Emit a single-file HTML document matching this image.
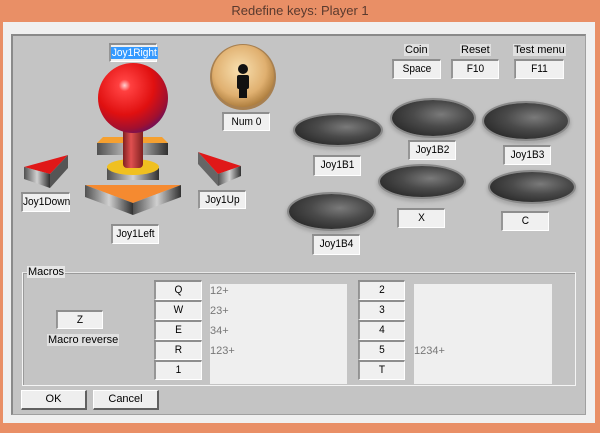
<!DOCTYPE html>
<html><head><style>
*{margin:0;padding:0;box-sizing:border-box}
body{width:600px;height:433px;background:#e98f66;position:relative;overflow:hidden;font-family:"Liberation Sans",Arial,sans-serif;font-size:11px;color:#000}
.a{position:absolute}
.win{left:3px;top:22px;width:592px;height:401px;background:#f0f0f0}
.panel{left:11px;top:34px;width:575px;height:381px;background:#c4c4c4;border:1px solid #a0a0a0;border-left:2px solid #8a8a8a;border-top:2px solid #8a8a8a}
.b{position:absolute;background:#f0f0f0;border-top:2px solid #8e8e8e;border-left:2px solid #8e8e8e;border-right:1px solid #fff;border-bottom:1px solid #fff;text-align:center;line-height:16px;font-size:11px;transform:scaleX(.92)}
.btn{position:absolute;background:#eeeeee;border:1px solid #fff;border-right:2px solid #606060;border-bottom:2px solid #606060;text-align:center;line-height:17px}
.lbl{position:absolute;background:#e0e0e0;font-size:11px;line-height:12px;padding:0 1px}
.el{position:absolute;border-radius:50%;background:radial-gradient(ellipse at 60% 40%,#7a7a7a 0%,#4a4a4a 40%,#2e2e2e 75%,#0e0e0e 100%);box-shadow:0 0 0 2px #8a8a8a,0 2px 3px 3px #a8a8a8}
.ta{position:absolute;background:#efefef;color:#777;font-size:11px}
.ta div{position:absolute;left:0}
</style></head><body>
<div class="a" style="left:0;top:3px;width:600px;text-align:center;font-size:13px;color:#5a3a2e">Redefine keys: Player 1</div>
<div class="a win"></div>
<div class="a panel"></div>

<svg class="a" style="left:0;top:0" width="600" height="433">
<defs>
<radialGradient id="ball" cx="0.38" cy="0.32" r="0.7"><stop offset="0" stop-color="#ffd0d0"/><stop offset="0.12" stop-color="#ff4040"/><stop offset="0.6" stop-color="#e01010"/><stop offset="0.9" stop-color="#a01030"/><stop offset="1" stop-color="#7a1050"/></radialGradient>
<linearGradient id="sh" x1="0" x2="1"><stop offset="0" stop-color="#802020"/><stop offset="0.4" stop-color="#e05050"/><stop offset="1" stop-color="#802020"/></linearGradient>
<linearGradient id="gr" x1="0" x2="1"><stop offset="0" stop-color="#505050"/><stop offset="0.5" stop-color="#d0d0d0"/><stop offset="1" stop-color="#303030"/></linearGradient>
<radialGradient id="coin" cx="0.45" cy="0.4" r="0.6"><stop offset="0" stop-color="#f8e0b0"/><stop offset="0.7" stop-color="#e0b070"/><stop offset="1" stop-color="#b08040"/></radialGradient>
</defs>
<polygon points="97,143 168,143 168,155 97,155" fill="url(#gr)"/>
<polygon points="103,137 162,137 168,143 97,143" fill="#f5a030"/>
<rect x="107" y="168" width="52" height="12" fill="url(#gr)"/>
<ellipse cx="133" cy="167" rx="26" ry="8" fill="#f0c020"/>
<rect x="123" y="128" width="20" height="40" rx="4" fill="url(#sh)"/>
<circle cx="133" cy="98" r="35" fill="url(#ball)"/>
<polygon points="85,185 181,185 133,203" fill="#f58a30"/>
<polygon points="85,185 133,203 133,215 85,197" fill="url(#gr)"/>
<polygon points="181,185 133,203 133,215 181,197" fill="url(#gr)"/>
<polygon points="24,167 68,155 50,174" fill="#e01818"/>
<polygon points="24,167 50,174 50,188 24,179" fill="url(#gr)"/>
<polygon points="50,174 68,155 68,168 50,188" fill="#555"/>
<polygon points="198,152 241,166 218,174" fill="#e01818"/>
<polygon points="198,152 218,174 218,186 198,164" fill="#666"/>
<polygon points="218,174 241,166 241,176 218,186" fill="url(#gr)"/>
<circle cx="243" cy="77" r="33" fill="#a88050"/>
<circle cx="243" cy="76" r="31" fill="url(#coin)"/>
<circle cx="243" cy="69" r="5" fill="#111"/>
<rect x="237" y="75" width="12" height="14" rx="2" fill="#111"/>
<rect x="239" y="88" width="8" height="10" fill="#111"/>
</svg>

<div class="b" style="left:107px;top:43px;width:52px;height:19px"><span style="background:#3399ff;color:#fff;padding:0 1px">Joy1Right</span></div>
<div class="b" style="left:19px;top:192px;width:53px;height:20px">Joy1Down</div>
<div class="b" style="left:196px;top:190px;width:52px;height:19px">Joy1Up</div>
<div class="b" style="left:109px;top:224px;width:52px;height:20px">Joy1Left</div>
<div class="b" style="left:220px;top:112px;width:52px;height:19px">Num 0</div>

<div class="lbl" style="left:404px;top:44px">Coin</div>
<div class="lbl" style="left:460px;top:44px">Reset</div>
<div class="lbl" style="left:513px;top:44px">Test menu</div>
<div class="b" style="left:390px;top:59px;width:53px;height:20px">Space</div>
<div class="b" style="left:449px;top:59px;width:52px;height:20px">F10</div>
<div class="b" style="left:512px;top:59px;width:54px;height:20px">F11</div>

<div class="el" style="left:295px;top:115px;width:86px;height:30px"></div>
<div class="el" style="left:392px;top:100px;width:82px;height:36px"></div>
<div class="el" style="left:484px;top:103px;width:84px;height:36px"></div>
<div class="el" style="left:380px;top:166px;width:84px;height:31px"></div>
<div class="el" style="left:490px;top:172px;width:84px;height:30px"></div>
<div class="el" style="left:289px;top:194px;width:85px;height:35px"></div>
<div class="b" style="left:311px;top:155px;width:52px;height:21px">Joy1B1</div>
<div class="b" style="left:406px;top:140px;width:52px;height:20px">Joy1B2</div>
<div class="b" style="left:501px;top:145px;width:52px;height:20px">Joy1B3</div>
<div class="b" style="left:395px;top:208px;width:52px;height:20px">X</div>
<div class="b" style="left:499px;top:211px;width:52px;height:20px">C</div>
<div class="b" style="left:310px;top:234px;width:52px;height:21px">Joy1B4</div>

<div class="a" style="left:22px;top:272px;width:554px;height:114px;border:1px solid #f4f4f4;border-top:1px solid #e8e8e8;box-shadow:inset 1px 1px 0 #9a9a9a"></div>
<div class="lbl" style="left:27px;top:266px;background:#e6e6e6">Macros</div>
<div class="b" style="left:54px;top:310px;width:51px;height:19px">Z</div>
<div class="lbl" style="left:47px;top:334px">Macro reverse</div>
<div class="b" style="left:152px;top:280px;width:52px;height:20px">Q</div>
<div class="b" style="left:152px;top:300px;width:52px;height:20px">W</div>
<div class="b" style="left:152px;top:320px;width:52px;height:20px">E</div>
<div class="b" style="left:152px;top:340px;width:52px;height:20px">R</div>
<div class="b" style="left:152px;top:360px;width:52px;height:20px">1</div>
<div class="ta" style="left:210px;top:284px;width:137px;height:100px">
<div style="top:1px">12+</div><div style="top:21px">23+</div><div style="top:41px">34+</div><div style="top:61px">123+</div></div>
<div class="b" style="left:356px;top:280px;width:51px;height:20px">2</div>
<div class="b" style="left:356px;top:300px;width:51px;height:20px">3</div>
<div class="b" style="left:356px;top:320px;width:51px;height:20px">4</div>
<div class="b" style="left:356px;top:340px;width:51px;height:20px">5</div>
<div class="b" style="left:356px;top:360px;width:51px;height:20px">T</div>
<div class="ta" style="left:414px;top:284px;width:138px;height:100px"><div style="top:61px">1234+</div></div>

<div class="btn" style="left:21px;top:390px;width:66px;height:20px">OK</div>
<div class="btn" style="left:93px;top:390px;width:66px;height:20px">Cancel</div>
</body></html>
